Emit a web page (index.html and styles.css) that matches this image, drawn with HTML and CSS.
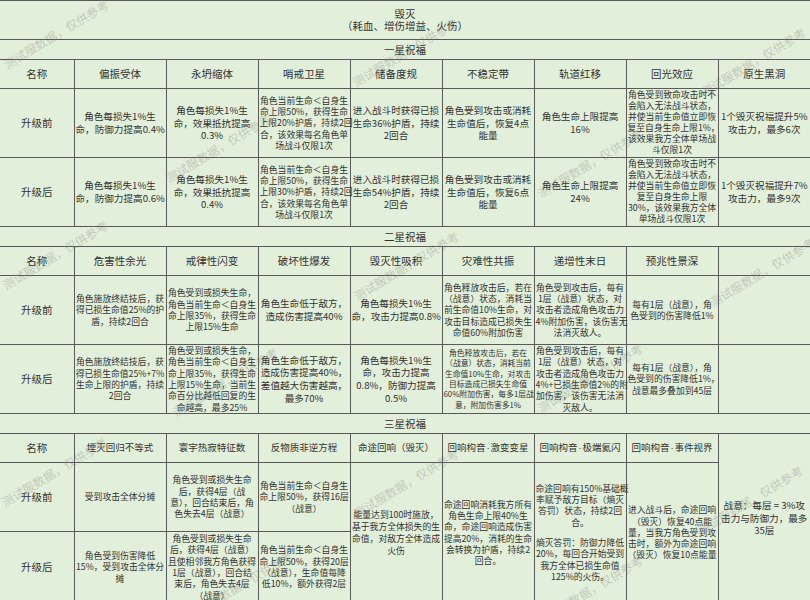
FILE: index.html
```html
<!DOCTYPE html>
<html lang="zh-CN">
<head>
<meta charset="utf-8">
<title>毁灭</title>
<link rel="stylesheet" href="styles.css">
</head>
<body>
<div class="page">
<table class="sheet">
<colgroup><col class="c-name"><col class="c"><col class="c"><col class="c"><col class="c"><col class="c"><col class="c"><col class="c"><col class="c"></colgroup>
<tbody>
<tr class="r-title"><td colspan="9" class="hd title re">毁灭<br>（耗血、增伤增益、火伤）</td></tr>

<tr class="r-sec"><td colspan="9" class="hd re">一星祝福</td></tr>
<tr class="r-head">
<th class="hd">名称</th><th class="hd">偏振受体</th><th class="hd">永坍缩体</th><th class="hd">哨戒卫星</th><th class="hd">储备度规</th><th class="hd">不稳定带</th><th class="hd">轨道红移</th><th class="hd">回光效应</th><th class="hd re">原生黑洞</th>
</tr>
<tr class="r-data">
<th class="hd">升级前</th>
<td>角色每损失1%生<br>命，防御力提高0.4%</td>
<td>角色每损失1%生<br>命，效果抵抗提高<br>0.3%</td>
<td class="f88">角色当前生命＜自身生<br>命上限50%，获得生命<br>上限20%护盾，持续2回<br>合，该效果每名角色单<br>场战斗仅限1次</td>
<td>进入战斗时获得已损<br>生命36%护盾，持续<br>2回合</td>
<td>角色受到攻击或消耗<br>生命值后，恢复4点<br>能量</td>
<td>角色生命上限提高<br>16%</td>
<td class="f88 tight">角色受到致命攻击时不<br>会陷入无法战斗状态，<br>并使当前生命值立即恢<br>复至自身生命上限1%，<br>该效果我方全体单场战<br>斗仅限1次</td>
<td class="re">1个毁灭祝福提升5%<br>攻击力，最多6次</td>
</tr>
<tr class="r-data">
<th class="hd">升级后</th>
<td>角色每损失1%生<br>命，防御力提高0.6%</td>
<td>角色每损失1%生<br>命，效果抵抗提高<br>0.4%</td>
<td class="f88">角色当前生命＜自身生<br>命上限50%，获得生命<br>上限30%护盾，持续2回<br>合，该效果每名角色单<br>场战斗仅限1次</td>
<td>进入战斗时获得已损<br>生命54%护盾，持续<br>2回合</td>
<td>角色受到攻击或消耗<br>生命值后，恢复6点<br>能量</td>
<td>角色生命上限提高<br>24%</td>
<td class="f88 tight">角色受到致命攻击时不<br>会陷入无法战斗状态，<br>并使当前生命值立即恢<br>复至自身生命上限<br>30%，该效果我方全体<br>单场战斗仅限1次</td>
<td class="re">1个毁灭祝福提升7%<br>攻击力，最多9次</td>
</tr>

<tr class="r-sec"><td colspan="9" class="hd re">二星祝福</td></tr>
<tr class="r-head">
<th class="hd">名称</th><th class="hd">危害性余光</th><th class="hd">戒律性闪变</th><th class="hd">破坏性爆发</th><th class="hd">毁灭性吸积</th><th class="hd">灾难性共振</th><th class="hd">递增性末日</th><th class="hd">预兆性景深</th><th class="hd re"></th>
</tr>
<tr class="r-data">
<th class="hd">升级前</th>
<td class="f88">角色施放终结技后，获<br>得已损生命值25%的护<br>盾，持续2回合</td>
<td class="f88">角色受到或损失生命，<br>角色当前生命＜自身生<br>命上限35%，获得生命<br>上限15%生命</td>
<td>角色生命低于敌方，<br>造成伤害提高40%</td>
<td>角色每损失1%生<br>命，攻击力提高0.8%</td>
<td class="f88">角色释放攻击后，若在<br>（战意）状态，消耗当<br>前生命值10%生命，对<br>攻击目标造成已损失生<br>命值60%附加伤害</td>
<td class="f88">角色受到攻击后，每有<br>1层（战意）状态，对<br>攻击者造成角色攻击力<br>4%附加伤害，该伤害无<br>法消灭敌人。</td>
<td class="f88">每有1层（战意），角<br>色受到的伤害降低1%</td>
<td class="re"></td>
</tr>
<tr class="r-data">
<th class="hd">升级后</th>
<td class="f88">角色施放终结技后，获<br>得已损生命值25%+7%<br>生命上限的护盾，持续<br>2回合</td>
<td class="f88">角色受到或损失生命，<br>角色当前生命＜自身生<br>命上限35%，获得生命<br>上限15%生命，当前生<br>命百分比越低回复的生<br>命越高，最多25%</td>
<td>角色生命低于敌方，<br>造成伤害提高40%，<br>差值越大伤害越高，<br>最多70%</td>
<td>角色每损失1%生<br>命，攻击力提高<br>0.8%，防御力提高<br>0.5%</td>
<td class="f78">角色释放攻击后，若在<br>（战意）状态，消耗当前<br>生命值10%生命，对攻击<br>目标造成已损失生命值<br>60%附加伤害，每多1层战<br>意，附加伤害多1%</td>
<td class="f88">角色受到攻击后，每有<br>1层（战意）状态，对<br>攻击者造成角色攻击力<br>4%+已损生命值2%的附<br>加伤害，该伤害无法消<br>灭敌人。</td>
<td class="f88">每有1层（战意），角<br>色受到的伤害降低1%，<br>战意最多叠加到45层</td>
<td class="re"></td>
</tr>

<tr class="r-sec"><td colspan="9" class="hd re">三星祝福</td></tr>
<tr class="r-head">
<th class="hd">名称</th><th class="hd3">堙灭回归不等式</th><th class="hd3">寰宇热寂特征数</th><th class="hd3">反物质非逆方程</th><th class="hd3">命途回响（毁灭）</th><th class="hd3">回响构音<span class="dot">·</span>激变变星</th><th class="hd3">回响构音<span class="dot">·</span>极端氦闪</th><th class="hd3">回响构音<span class="dot">·</span>事件视界</th>
<td rowspan="3" class="re">战意：每层 = 3%攻<br>击力与防御力，最多<br>35层</td>
</tr>
<tr class="r-data">
<th class="hd">升级前</th>
<td class="f88">受到攻击全体分摊</td>
<td class="f88">角色受到或损失生命<br>后，获得4层（战<br>意），回合结束后，角<br>色失去4层（战意）</td>
<td class="f88">角色当前生命＜自身生<br>命上限50%，获得16层<br>（战意）</td>
<td rowspan="2" class="f88 loose">能量达到100时施放，<br>基于我方全体损失的生<br>命值，对敌方全体造成<br>火伤</td>
<td rowspan="2" class="f88">命途回响消耗我方所有<br>角色生命上限40%生<br>命，命途回响造成伤害<br>提高20%，消耗的生命<br>会转换为护盾，持续2<br>回合。</td>
<td rowspan="2" class="f88 loose2"><p class="para">命途回响有150%基础概<br>率赋予敌方目标（熵灭<br>答罚）状态，持续2回<br>合。</p><p class="para">熵灭答罚：防御力降低<br>20%，每回合开始受到<br>我方全体已损生命值<br>125%的火伤。</p></td>
<td rowspan="2" class="f88">进入战斗后，命途回响<br>（毁灭）恢复40点能<br>量，当我方角色受到攻<br>击时，额外为命途回响<br>（毁灭）恢复10点能量</td>
</tr>
<tr class="r-last">
<th class="hd">升级后</th>
<td class="f88">角色受到伤害降低<br>15%，受到攻击全体分<br>摊</td>
<td class="f88">角色受到或损失生命<br>后，获得4层（战意）<br>且使相邻我方角色获得<br>1层（战意），回合结<br>束后，角色失去4层<br>（战意）</td>
<td class="f88">角色当前生命＜自身生<br>命上限50%，获得20层<br>（战意），生命值每降<br>低10%，额外获得2层</td>
</tr>
</tbody>
</table>

<div class="wm-layer" aria-hidden="true">
<span class="wm wm-a1">测试服数据，仅供参考</span>
<span class="wm wm-a2">测试服数据，仅供参考</span>
<span class="wm wm-a3">测试服数据，仅供参考</span>
<span class="wm wm-b1">测试服数据，仅供参考</span>
<span class="wm wm-b2">测试服数据，仅供参考</span>
<span class="wm wm-c1">测试服数据，仅供参考</span>
<span class="wm wm-c2">测试服数据，仅供参考</span>
<span class="wm wm-c3">测试服数据，仅供参考</span>
<span class="wm wm-d1">测试服数据，仅供参考</span>
<span class="wm wm-d2">测试服数据，仅供参考</span>
<span class="wm wm-e1">测试服数据，仅供参考</span>
<span class="wm wm-e2">测试服数据，仅供参考</span>
<span class="wm wm-e3">测试服数据，仅供参考</span>
<span class="wm wm-f1">测试服数据，仅供参考</span>
<span class="wm wm-f2">测试服数据，仅供参考</span>
</div>
</div>
</body>
</html>
```

FILE: styles.css
```css
html, body {
  margin: 0;
  padding: 0;
  background: #e2efda;
}
body {
  font-family: "Noto Sans CJK SC", "Noto Sans", sans-serif;
  color: #333;
  width: 810px;
  height: 600px;
  overflow: hidden;
}
.page {
  position: relative;
  width: 810px;
  height: 600px;
  overflow: hidden;
}
.sheet {
  border-collapse: collapse;
  table-layout: fixed;
  width: 810px;
  border-top: 1px solid #c4c4c4;
}
.c-name { width: 74px; }
.c { width: 92px; }

.sheet td, .sheet th {
  border: 1px solid #5a5a5a;
  padding: 0 1px;
  text-align: center;
  vertical-align: middle;
  font-weight: normal;
  font-size: 9.6px;
  line-height: 12.6px;
  white-space: nowrap;
  overflow: visible;
}
.sheet tr > :first-child { border-left: none; }
.sheet .re { border-right: none; }

.r-title { height: 39px; }
.r-sec { height: 20px; }
.r-head { height: 29px; }
.r-data { height: 69px; }
.r-last { height: 71px; }

.sheet .hd {
  font-size: 10.5px;
  line-height: 11.6px;
}
.sheet .hd3 {
  font-size: 9.5px;
  line-height: 11.6px;
}
.dot {
  font-family: "Liberation Sans", sans-serif;
  padding: 0 1px;
}
.sheet .f88 {
  font-size: 8.8px;
  line-height: 11.3px;
}
.sheet .f88.tight { line-height: 10.9px; }
.sheet .f88.loose { line-height: 12px; }
.sheet .f78 {
  font-size: 7.8px;
  line-height: 10.4px;
}
.para { margin: 0; }
.para + .para { margin-top: 9px; }
.loose2 { line-height: 11.7px; }

.wm-layer {
  position: absolute;
  left: 0;
  top: 0;
  width: 810px;
  height: 600px;
  pointer-events: none;
}
.wm {
  position: absolute;
  font-size: 12px;
  line-height: 14px;
  color: rgba(110, 110, 110, 0.3);
  white-space: nowrap;
  transform: translate(-50%, -50%) rotate(-31deg);
}
.wm-a1 { left: 56px; top: 34px; }
.wm-a2 { left: 405px; top: 52px; }
.wm-a3 { left: 753px; top: 62px; }
.wm-b1 { left: 218px; top: 148px; }
.wm-b2 { left: 590px; top: 163px; }
.wm-c1 { left: 55px; top: 255px; }
.wm-c2 { left: 406px; top: 266px; }
.wm-c3 { left: 762px; top: 272px; }
.wm-d1 { left: 225px; top: 382px; }
.wm-d2 { left: 590px; top: 378px; }
.wm-e1 { left: 54px; top: 472px; }
.wm-e2 { left: 406px; top: 483px; }
.wm-e3 { left: 750px; top: 500px; }
.wm-f1 { left: 240px; top: 585px; }
.wm-f2 { left: 590px; top: 590px; }
```
